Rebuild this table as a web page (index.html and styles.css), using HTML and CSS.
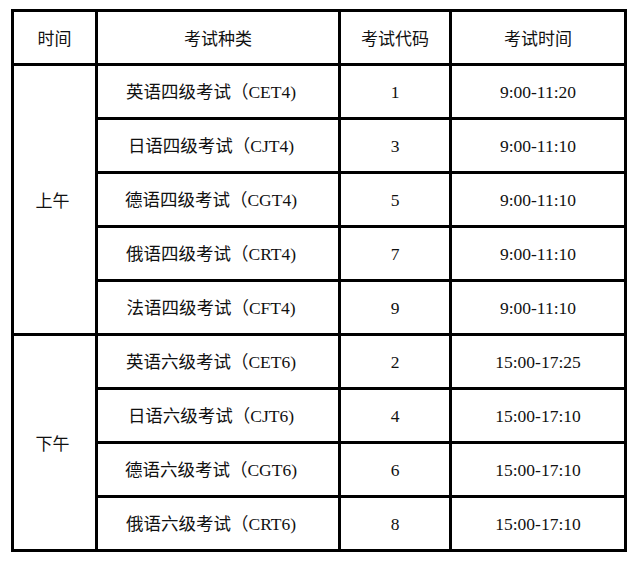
FILE: index.html
```html
<!DOCTYPE html>
<html lang="zh-CN">
<head>
<meta charset="utf-8">
<link rel="stylesheet" href="styles.css">
</head>
<body>
<table class="sched">
  <colgroup>
    <col class="c1"><col class="c2"><col class="c3"><col class="c4">
  </colgroup>
  <thead>
    <tr class="head"><th>时间</th><th>考试种类</th><th>考试代码</th><th>考试时间</th></tr>
  </thead>
  <tbody>
    <tr><td class="period" rowspan="5">上午</td><td class="kind">英语四级考试（CET4)</td><td>1</td><td>9:00-11:20</td></tr>
    <tr><td class="kind">日语四级考试（CJT4)</td><td>3</td><td>9:00-11:10</td></tr>
    <tr><td class="kind">德语四级考试（CGT4)</td><td>5</td><td>9:00-11:10</td></tr>
    <tr><td class="kind">俄语四级考试（CRT4)</td><td>7</td><td>9:00-11:10</td></tr>
    <tr><td class="kind">法语四级考试（CFT4)</td><td>9</td><td>9:00-11:10</td></tr>
    <tr><td class="period" rowspan="4">下午</td><td class="kind">英语六级考试（CET6)</td><td>2</td><td>15:00-17:25</td></tr>
    <tr><td class="kind">日语六级考试（CJT6)</td><td>4</td><td>15:00-17:10</td></tr>
    <tr><td class="kind">德语六级考试（CGT6)</td><td>6</td><td>15:00-17:10</td></tr>
    <tr><td class="kind">俄语六级考试（CRT6)</td><td>8</td><td>15:00-17:10</td></tr>
  </tbody>
</table>
</body>
</html>
```
FILE: styles.css
```css
html, body {
  margin: 0;
  padding: 0;
  background: #fff;
}
body {
  padding: 9px 0 0 11px;
  font-family: "Liberation Serif", "Noto Sans CJK SC", serif;
  color: #111;
}
.sched {
  border-collapse: collapse;
  table-layout: fixed;
  width: 616px;
  border: 3px solid #000;
}
.c1 { width: 84px; }
.c2 { width: 243px; }
.c3 { width: 111px; }
.c4 { width: 175px; }
.sched th, .sched td {
  border: 3px solid #000;
  text-align: center;
  vertical-align: middle;
  padding: 0;
  font-size: 17.5px;
  font-weight: normal;
  line-height: 20px;
}
.sched th {
  font-family: "Noto Sans CJK SC", sans-serif;
  font-size: 17px;
}
.head th { height: 51px; }
.sched tbody td { height: 51px; }
.sched .kind { padding-right: 14px; }
.sched .period {
  font-family: "Noto Sans CJK SC", sans-serif;
  font-size: 17px;
  padding-right: 4px;
}
```
